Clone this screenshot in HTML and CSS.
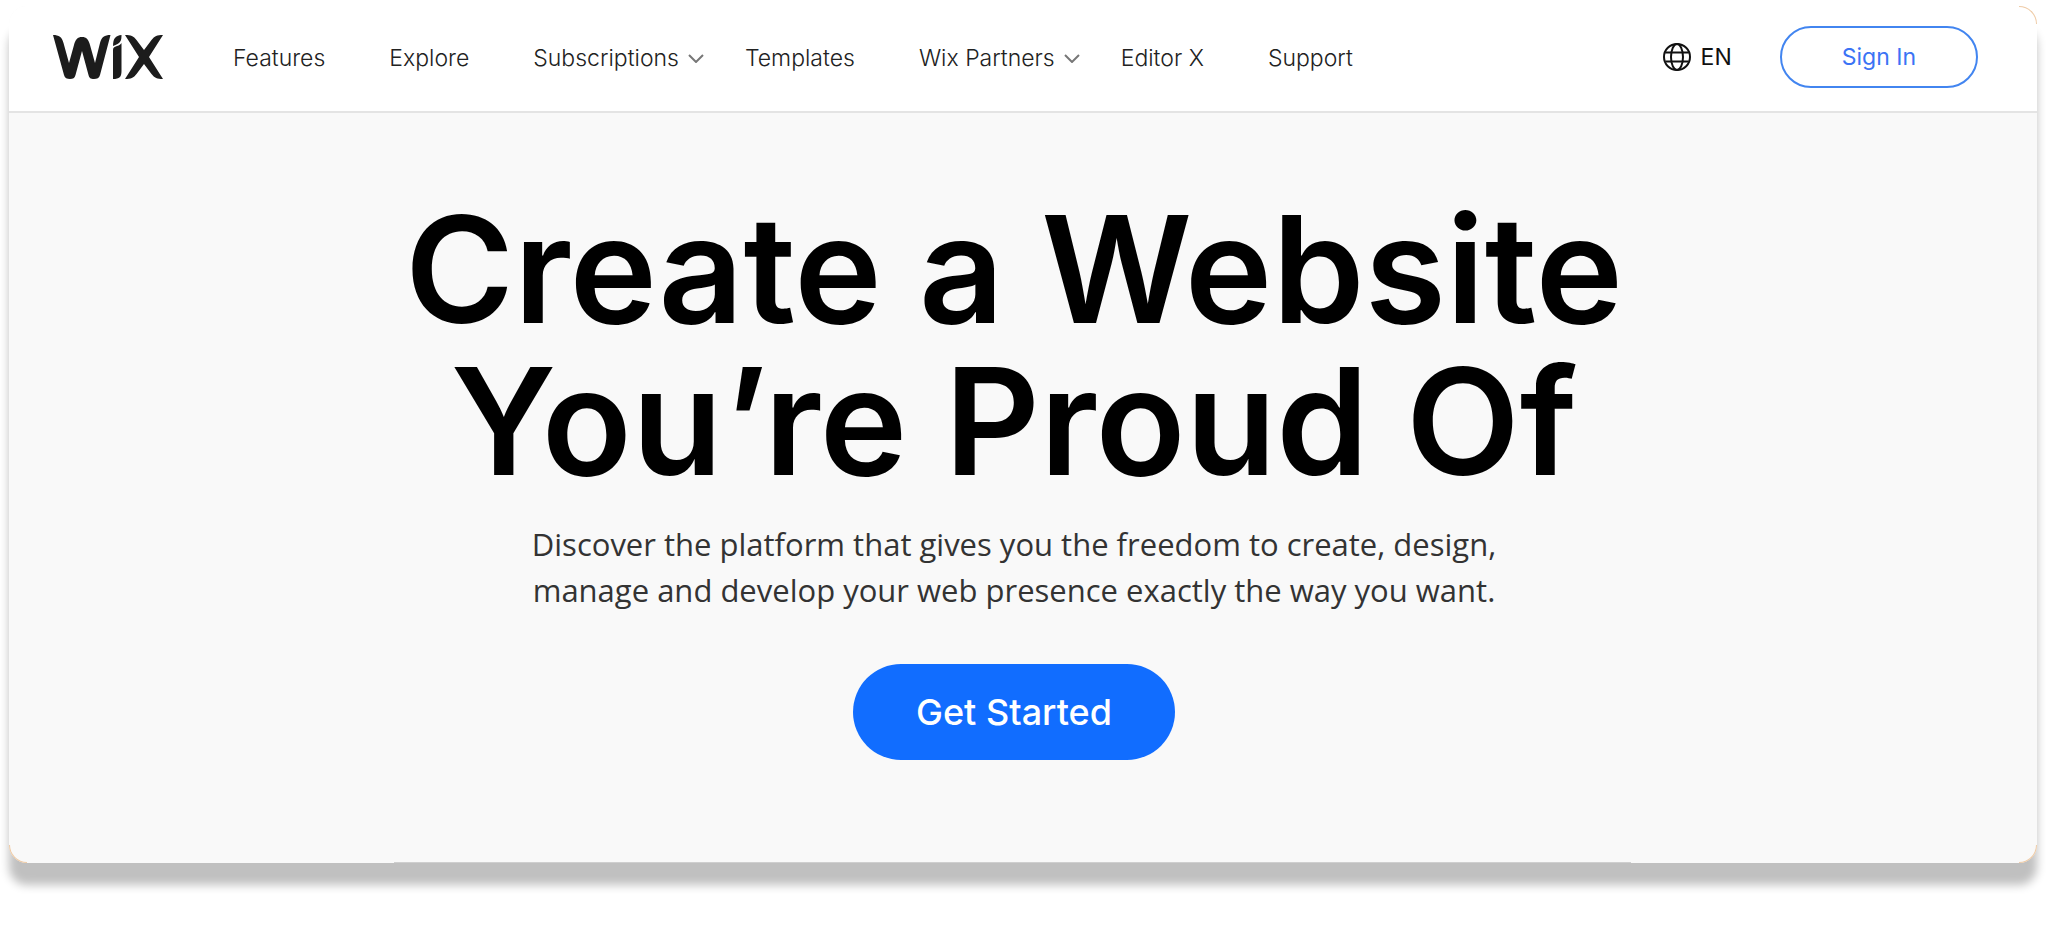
FILE: index.html
```html
<!DOCTYPE html>
<html lang="en">
<head>
  <meta charset="UTF-8">
  <meta name="viewport" content="width=device-width, initial-scale=1.0">
  <title>Create a Website</title>
  <link rel="stylesheet" href="styles.css">
</head>
<body>
  <div class="window">
    <header class="header">
      <a href="#" class="logo" aria-label="Wix">
        <svg viewBox="0 0 110 44" width="110" height="44" fill="#1c1c1c">
          <path d="M0 0C6 0 9 2 10.500 8L16 28L21 10C22.500 4.500 24.500 2 29 2C33.500 2 35.500 4.500 37 10L42 28L47 8C48.500 2 51.500 0 57.500 0L47 40C46.200 43 44 44 41 44C37.500 44 36.300 43 35.500 40L29 16L22.500 40C21.700 43 20 44 17 44C14 44 11.800 43 11 40Z"/>
          <path d="M68.500 0C68.500 6 67.500 8.500 60 11C60 3.500 62.500 0.500 68.500 0Z"/>
          <path d="M68.500 8V36C68.500 42 66.500 44 60 44V15C60 12.500 61 12 64 11C66.500 10.200 67.500 9.500 68.500 8Z"/>
          <path d="M72 0C78 0 80.500 1 83.500 5L91 15L98.500 5C101.500 1 104 0 110 0L96 22L110 44C104 44 101.500 43 98.500 39L91 29L83.500 39C80.500 43 78 44 72 44L86 22Z"/>
        </svg>
      </a>
      <nav class="nav">
        <a href="#">Features</a>
        <a href="#">Explore</a>
        <a href="#" class="dropdown">Subscriptions
          <svg viewBox="0 0 16 9" width="16" height="9"><path d="M1 1L8 8L15 1"/></svg>
        </a>
        <a href="#">Templates</a>
        <a href="#" class="dropdown">Wix Partners
          <svg viewBox="0 0 16 9" width="16" height="9"><path d="M1 1L8 8L15 1"/></svg>
        </a>
        <a href="#">Editor X</a>
        <a href="#">Support</a>
      </nav>
      <div class="actions">
        <button type="button" class="language">
          <svg viewBox="0 0 28 28" width="28" height="28">
            <circle cx="14" cy="14" r="13"/>
            <ellipse cx="14" cy="14" rx="6" ry="13"/>
            <path d="M2.500 9.500H25.500M2.500 18.500H25.500"/>
          </svg>
          EN
        </button>
        <button type="button" class="sign-in">Sign In</button>
      </div>
    </header>
    <main class="hero">
      <h1>Create a Website<br>You’re Proud Of</h1>
      <p>Discover the platform that gives you the freedom to create, design,<br>manage and develop your web presence exactly the way you want.</p>
      <button type="button" class="get-started">Get Started</button>
    </main>
    <span class="corner corner-top"></span>
    <span class="corner corner-right"></span>
    <span class="corner corner-left"></span>
  </div>
</body>
</html>
```
FILE: styles.css
```css
body {
  margin: 0;
  padding: 6px 11px 74px 9px;
  background-color: #fff;
  font-family: Inter, 'Liberation Sans', sans-serif;
}
.window {
  position: relative;
  border-radius: 18px;
  background-color: #f9f9f9;
  box-shadow: 0 22px 10px #c0c0c0;
}
/* thin line along the bottom edge */
.window::after {
  content: '';
  position: absolute;
  left: 19%;
  right: 20%;
  bottom: 0;
  height: 1px;
  background-color: #cfcfcf;
}
/* orange glints on the rounded corners */
.corner {
  position: absolute;
  width: 18px;
  height: 18px;
  box-sizing: border-box;
  border: 0 solid #efcba6;
}
.corner-top {
  top: 0;
  right: 0;
  border-width: 1px 1px 0 0;
  border-top-right-radius: 18px;
}
.corner-right {
  right: 0;
  bottom: 0;
  border-width: 0 1px 1px 0;
  border-bottom-right-radius: 18px;
}
.corner-left {
  left: 0;
  bottom: 0;
  border-width: 0 0 1px 1px;
  border-bottom-left-radius: 18px;
}
.header {
  display: flex;
  align-items: center;
  padding: 20px 59px 23px 44px;
  border-bottom: 2px solid #e4e4e4;
  border-radius: 18px 18px 0 0;
  background-color: #fff;
}
.logo,
.logo svg {
  display: block;
}
.nav {
  display: flex;
  margin-left: 38px;
  padding-top: 2px;
}
.nav a {
  display: flex;
  align-items: center;
  gap: 9px;
  padding: 0 32px;
  color: #222;
  font-size: 23px;
  font-weight: 300;
  line-height: 28px;
  text-decoration: none;
  white-space: nowrap;
}
.nav .dropdown {
  padding-right: 9px;
}
.nav svg {
  fill: none;
  stroke: #777;
  stroke-width: 2;
}
.actions {
  display: flex;
  align-items: center;
  gap: 48px;
  margin-left: auto;
}
button {
  font-family: inherit;
  cursor: pointer;
}
.language {
  display: flex;
  align-items: center;
  gap: 10px;
  padding: 0;
  border: none;
  background: none;
  color: #111;
  font-size: 23px;
}
.language svg {
  fill: none;
  stroke: #111;
  stroke-width: 2;
}
.sign-in {
  padding: 15px 60px;
  border: 2px solid #4285f0;
  border-radius: 31px;
  background-color: #fff;
  color: #3b73f5;
  font-size: 23px;
  line-height: 28px;
}
.hero {
  display: flex;
  flex-direction: column;
  align-items: center;
  padding: 81px 18px 103px 0;
  text-align: center;
}
.hero h1 {
  margin: 0;
  color: #000;
  font-size: 148px;
  font-weight: 600;
  line-height: 152px;
}
.hero p {
  margin: 23px 0 51px;
  color: #333;
  font-family: 'Open Sans', 'Noto Sans', sans-serif;
  font-size: 31px;
  line-height: 46px;
}
.get-started {
  padding: 26px 63px;
  border: none;
  border-radius: 48px;
  background-color: #116dff;
  color: #fff;
  font-size: 36px;
  font-weight: 500;
  line-height: 44px;
}
```
